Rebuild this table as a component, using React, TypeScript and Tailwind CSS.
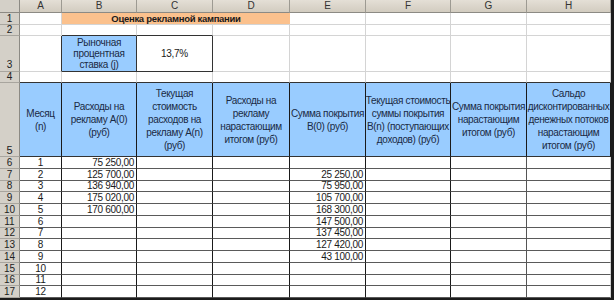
import React from "react";

const cols = ["A", "B", "C", "D", "E", "F", "G", "H"];

// значения по строкам 6-17
const colB = ["75 250,00", "125 700,00", "136 940,00", "175 020,00", "170 600,00", "", "", "", "", "", "", ""];
const colE = ["", "25 250,00", "75 950,00", "105 700,00", "168 300,00", "147 500,00", "137 450,00", "127 420,00", "43 100,00", "", "", ""];

const headers: string[][] = [
  ["Месяц", "(n)"],
  ["Расходы на", "рекламу A(0)", "(руб)"],
  ["Текущая", "стоимость", "расходов на", "рекламу A(n)", "(руб)"],
  ["Расходы на", "рекламу", "нарастающим", "итогом (руб)"],
  ["Сумма покрытия", "B(0) (руб)"],
  ["Текущая стоимость", "суммы покрытия", "B(n) (поступающих", "доходов) (руб)"],
  ["Сумма покрытия", "нарастающим", "итогом (руб)"],
  ["Сальдо", "дисконтированных", "денежных потоков", "нарастающим", "итогом (руб)"],
];

const rowHead = "bg-[#d4d0c8] border-r border-b border-r-[#8c8a84] border-b-[#a8a59e] text-[10px] text-[#222] flex justify-center overflow-hidden";
const grid = "border-r border-b border-[#d4d4d4] bg-white";
const data = "bg-white border-r border-b border-r-[#1a1a1a] border-b-[#5a5a5a] text-[10px] tracking-[-0.3px] leading-none flex items-center overflow-hidden";

export default function App() {
  return (
    <div className="w-[614px] h-[300px] bg-white overflow-hidden font-['Liberation_Sans',Arial,sans-serif] text-[#1a1a1a] border-r-[3px] border-b-[2px] border-[#1c1c1c] box-border">
      <div className="grid grid-cols-[20px_42px_75px_76px_77px_76px_85px_76px_84px] grid-rows-[13px_12px_11px_36px_11px_74px_12px_12px_11px_12px_12px_12px_11px_12px_12px_12px_11px_12px]">
        {/* заголовки столбцов */}
        <div className="bg-[#d4d0c8] border-r border-b border-r-[#8c8a84] border-b-[#8c8a84]" />
        {cols.map((c) => (
          <div key={c} className="bg-gradient-to-b from-[#e4dfd6] to-[#d2ccc0] border-r border-b border-r-[#9d9a92] border-b-[#8c8a84] text-[10px] leading-[12px] text-center text-[#333]">
            {c}
          </div>
        ))}

        {/* строка 1 */}
        <div className={`${rowHead} leading-[11px] items-center`}>1</div>
        <div className={grid} />
        <div className="col-span-3 bg-[#fbc18d] border-b border-[#d4d4d4] text-[9.5px] tracking-[-0.3px] font-bold leading-[11px] text-center text-[#1a1a1a]">
          Оценка рекламной кампании
        </div>
        <div className={grid} />
        <div className={grid} />
        <div className={grid} />
        <div className={grid} />

        {/* строка 2 */}
        <div className={`${rowHead} leading-[10px] items-center`}>2</div>
        <div className={grid} />
        <div className="border-r border-b border-r-[#d4d4d4] border-b-[#333]" />
        <div className="border-r border-b border-r-[#d4d4d4] border-b-[#333]" />
        <div className={grid} />
        <div className={grid} />
        <div className={grid} />
        <div className={grid} />
        <div className={grid} />

        {/* строка 3 */}
        <div className={`${rowHead} items-end leading-[12px]`}>3</div>
        <div className="border-r border-b border-r-[#333] border-b-[#d4d4d4]" />
        <div className="bg-[#99ccff] border-r border-b border-[#333] flex flex-col items-center justify-center text-[10px] tracking-[-0.3px] leading-[11px] text-[#1a2a44]">
          <span>Рыночная</span>
          <span>процентная</span>
          <span>ставка (j)</span>
        </div>
        <div className="bg-white border-r border-b border-[#333] flex items-center justify-center text-[10px] tracking-[-0.3px]">13,7%</div>
        <div className={grid} />
        <div className={grid} />
        <div className={grid} />
        <div className={grid} />
        <div className={grid} />

        {/* строка 4 */}
        <div className={`${rowHead} leading-[10px] items-center`}>4</div>
        {cols.map((c) => (
          <div key={c} className="border-r border-b border-r-[#d4d4d4] border-b-[#333]" />
        ))}

        {/* строка 5 — шапка таблицы */}
        <div className={`${rowHead} items-end leading-[12px] text-[11px]`}>5</div>
        {headers.map((lines, i) => (
          <div key={i} className="bg-[#99ccff] border-r border-b border-r-[#1a1a1a] border-b-[#333] flex flex-col items-center justify-center text-[10px] tracking-[-0.35px] leading-[13px] text-center text-[#1a2a44] overflow-hidden">
            {lines.map((l, j) => (
              <span key={j} className="whitespace-nowrap">{l}</span>
            ))}
          </div>
        ))}

        {/* строки 6-17 */}
        {colB.map((b, r) => (
          <React.Fragment key={r}>
            <div className={`${rowHead} items-center leading-none`}>{r + 6}</div>
            <div className={`${data} justify-center`}>{r + 1}</div>
            <div className={`${data} justify-end pr-[2px]`}>{b}</div>
            <div className={data} />
            <div className={data} />
            <div className={`${data} justify-end pr-[2px]`}>{colE[r]}</div>
            <div className={data} />
            <div className={`${data} border-r-[#555]`} />
            <div className={`${data} border-r-[#d4d4d4]`} />
          </React.Fragment>
        ))}
      </div>
    </div>
  );
}
